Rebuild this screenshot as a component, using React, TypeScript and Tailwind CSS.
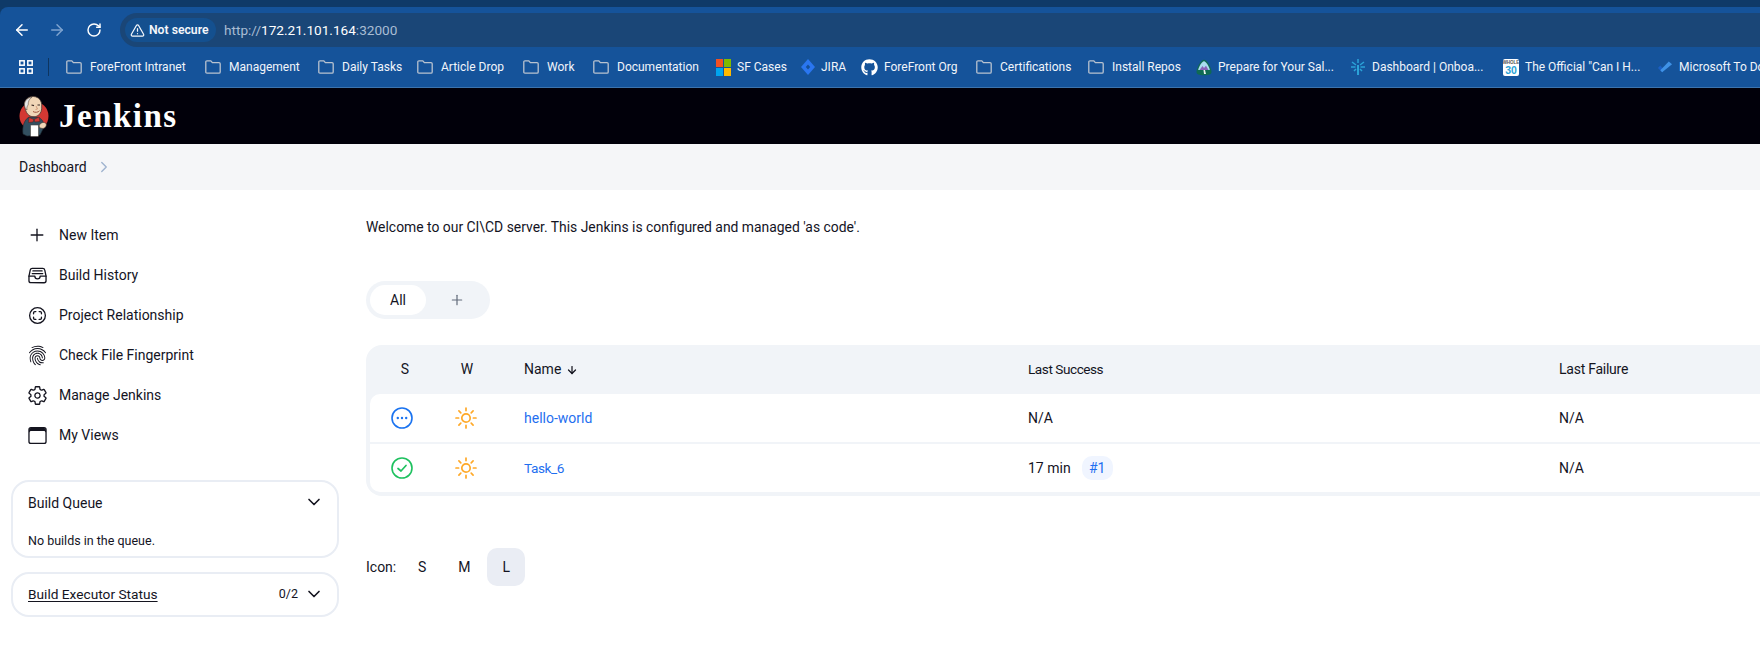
import { ArrowLeft, ArrowRight, RotateCw, TriangleAlert, ChevronRight, ChevronDown, Plus, ArrowDown } from "lucide-react";
import { IoFileTrayFullOutline, IoScanCircleOutline, IoFingerPrintOutline, IoSettingsOutline, IoBrowsersOutline } from "react-icons/io5";
import { FaGithub } from "react-icons/fa";
import type { ReactNode } from "react";

const fontStack = "font-['Roboto','Noto_Sans',sans-serif]";

function FolderIcon() {
  return (
    <svg width="16" height="14" viewBox="0 0 16 14" fill="none" stroke="#b9c3d0" strokeWidth="1.3" className="mr-[2px] shrink-0">
      <path d="M0.8 2 Q0.8 0.8 2 0.8 H5.8 L7.4 2.6 H14 Q15.2 2.6 15.2 3.8 V12 Q15.2 13.2 14 13.2 H2 Q0.8 13.2 0.8 12Z" />
    </svg>
  );
}

function MsLogo() {
  return (
    <svg width="15" height="17" viewBox="0 0 15 17" className="shrink-0">
      <rect x="0" y="0" width="7" height="8" fill="#f25022" />
      <rect x="8" y="0" width="7" height="8" fill="#7fba00" />
      <rect x="0" y="9" width="7" height="8" fill="#00a4ef" />
      <rect x="8" y="9" width="7" height="8" fill="#ffb900" />
    </svg>
  );
}

function JiraIcon() {
  return (
    <svg width="14" height="16" viewBox="0 0 14 16" className="shrink-0">
      <path d="M7 0 L14 8 L7 16 L0 8Z" fill="#2a76f0" />
      <path d="M7 5.5 L9.2 8 L7 10.5 L4.8 8Z" fill="#14509a" />
    </svg>
  );
}

function TrailIcon() {
  return (
    <svg width="16" height="17" viewBox="0 0 16 17" className="shrink-0">
      <path d="M8 0.8 C11 0.8 15.5 9 15.5 13 C15.5 15.5 13 16.2 8 16.2 C3 16.2 0.5 15.5 0.5 13 C0.5 9 5 0.8 8 0.8Z" fill="#0f6a53" />
      <path d="M8 2.2 C10 2.2 13.5 8 13.8 11 L2.2 11 C2.5 8 6 2.2 8 2.2Z" fill="#a9dcef" />
      <path d="M3.5 11 L6.5 7 L8 9 L10 6.8 L12.5 11Z" fill="#8a62b8" />
      <path d="M7.5 11 L9 11 L10 15 L8 15Z" fill="#e9f3ef" />
    </svg>
  );
}

function SnowIcon() {
  return (
    <svg width="16" height="18" viewBox="0 0 16 18" className="shrink-0" stroke="#2ba3d8" strokeWidth="1.5" fill="none">
      <path d="M8 7 L8 17" strokeWidth="2" />
      <path d="M8 1 L8 5 M2 4 L6 7 M14 4 L10 7 M1 9 L5.5 9 M15 9 L10.5 9 M4 13 L6 11 M12 13 L10 11" />
    </svg>
  );
}

function Whole30Icon() {
  return (
    <svg width="16" height="17" viewBox="0 0 16 17" className="shrink-0">
      <rect width="16" height="17" rx="2" fill="#ffffff" />
      <text x="8" y="5" fontSize="4.5" textAnchor="middle" fill="#555" fontFamily="Liberation Sans" fontWeight="700">WHOLE</text>
      <text x="8" y="15" fontSize="10.5" textAnchor="middle" fill="#2aa3d6" fontFamily="Liberation Sans" fontWeight="700">30</text>
    </svg>
  );
}

function TodoIcon() {
  return (
    <svg width="16" height="17" viewBox="0 0 17 17" className="shrink-0">
      <path d="M1 9 L3.5 6.5 L7.5 10.5 L5.5 13.5Z" fill="#1a5fc4" />
      <path d="M5.5 13.5 L3.5 11.5 L12.5 2 L16 5Z" fill="#3f92e6" />
    </svg>
  );
}

function Bookmark({ icon, label, className }: { icon: ReactNode; label: string; className: string }) {
  return (
    <div className={"flex shrink-0 items-center gap-[6px] whitespace-nowrap text-[12px] text-[#f1f5fa] " + className}>
      {icon}
      <span>{label}</span>
    </div>
  );
}

function JenkinsLogo() {
  return (
    <svg width="30" height="41" viewBox="0 0 30 41" className="shrink-0">
      <circle cx="15" cy="20" r="14.5" fill="#d33833" />
      <path d="M5.5 9 C5 3.5 10 0.3 14.5 0.5 C20 0.8 23 5 22.7 10 C23 14 22 17.5 19 19.5 C16 21.5 11.5 21 9 18.5 C6.8 16 5.8 12.5 5.5 9Z" fill="#f0d6b7" stroke="#4a3a33" strokeWidth="0.8" />
      <path d="M5.5 9 C5.3 4.5 9 1.5 13 1.2 C10 3 9 6 9.2 9 C8 10 7.6 12 8 14 C6.5 13 5.7 11 5.5 9Z" fill="#e7e7e7" stroke="#4a3a33" strokeWidth="0.5" />
      <path d="M12.5 9 L15 9.6 M18.5 9 L21 9" stroke="#3a2a25" strokeWidth="1.1" />
      <path d="M14 15.5 C16 16.8 19 16.5 20.5 14.8" stroke="#a0553d" strokeWidth="1" fill="none" />
      <path d="M17 10 L18.5 13 L16.5 13.5" stroke="#c98e6e" strokeWidth="0.8" fill="none" />
      <path d="M4 38 C3 31 5 24 10 21 L20 21.5 C24 24 25 27 25 31 L21 39 L8 40Z" fill="#335061" stroke="#1f2a33" strokeWidth="0.6" />
      <path d="M10 21.5 L15 23.5 L14 26 L9.5 26.5Z M15 23.5 L20 21 L21 25.5 L16 26Z" fill="#d33833" stroke="#49221f" strokeWidth="0.5" />
      <rect x="11.5" y="29" width="8" height="11.5" rx="0.8" fill="#ffffff" stroke="#49423d" strokeWidth="0.6" />
      <path d="M20 30 C21 26.5 25 25.5 27 27.5 C28 29.5 26.5 32 24 32.5 L21 32Z" fill="#f0d6b7" stroke="#4a3a33" strokeWidth="0.6" />
    </svg>
  );
}

function SideItem({ icon, label }: { icon: ReactNode; label: string }) {
  return (
    <div className="flex h-[40px] items-center text-[14px] text-[#14141f]">
      <span className="flex w-[26px] justify-center">{icon}</span>
      <span className="ml-[9px]">{label}</span>
    </div>
  );
}

function Sun() {
  return (
    <svg width="22" height="22" viewBox="0 0 22 22" fill="none" stroke="#ffa928" strokeWidth="1.7" strokeLinecap="round" className="mr-[2px]">
      <circle cx="11" cy="11" r="4.2" />
      <path d="M11 1 V3.6 M11 18.4 V21 M1 11 H3.6 M18.4 11 H21 M3.9 3.9 L5.8 5.8 M16.2 16.2 L18.1 18.1 M3.9 18.1 L5.8 16.2 M16.2 5.8 L18.1 3.9" />
    </svg>
  );
}

function StatusBlue() {
  return (
    <svg width="22" height="22" viewBox="0 0 22 22" fill="none" className="mr-[6px]">
      <circle cx="11" cy="11" r="10" stroke="#1a73f0" strokeWidth="1.6" />
      <circle cx="6.8" cy="11" r="1.2" fill="#1a73f0" />
      <circle cx="11" cy="11" r="1.2" fill="#1a73f0" />
      <circle cx="15.2" cy="11" r="1.2" fill="#1a73f0" />
    </svg>
  );
}

function StatusGreen() {
  return (
    <svg width="22" height="22" viewBox="0 0 22 22" fill="none" className="mr-[6px]">
      <circle cx="11" cy="11" r="10" stroke="#1ec15f" strokeWidth="1.6" />
      <path d="M7 11.5 L10 14 L15 8.5" stroke="#1ec15f" strokeWidth="1.7" strokeLinecap="round" strokeLinejoin="round" />
    </svg>
  );
}

const gridCols = "grid grid-cols-[70px_54px_534px_531px_1fr]";

export default function App() {
  return (
    <div className={"h-[659px] w-[1760px] overflow-hidden bg-white text-[#14141f] " + fontStack}>
      {/* Browser chrome */}
      <div className="h-[7px] bg-[#0f3a68]" />
      <div className="bg-[#0f3a68]">
        <div className="rounded-tl-lg bg-[#15539a]">
          <div className="flex h-[40px] items-start pt-[6px]">
            <div className="flex h-[34px] w-[120px] shrink-0 items-center text-white">
              <ArrowLeft size={18} className="ml-[13px]" strokeWidth={2} />
              <ArrowRight size={18} className="ml-[17px] text-[#7ea3cf]" strokeWidth={2} />
              <RotateCw size={16} className="ml-[20px]" strokeWidth={2.2} />
            </div>
            <div className="flex h-[34px] flex-1 items-center rounded-l-full bg-[#1a4677] pl-[5px]">
              <div className="flex h-[24px] w-[91px] items-center rounded-full bg-[#14508f] pl-[5px] text-[12.2px] font-semibold text-[#f4f7fb]">
                <TriangleAlert size={15} strokeWidth={2} className="mr-[4px] shrink-0" />
                <span className="whitespace-nowrap">Not secure</span>
              </div>
              <div className="ml-[8px] text-[13.6px] text-[#a9bdd4]">
                http://<span className="text-white">172.21.101.164</span>:32000
              </div>
            </div>
          </div>
          <div className="flex h-[41px] items-center overflow-hidden border-b border-[#3c73ad] pl-[19px]">
            <svg width="14" height="14" viewBox="0 0 14 14" fill="none" stroke="#ffffff" strokeWidth="1.5" className="shrink-0">
              <rect x="0.8" y="0.8" width="4.4" height="4.4" />
              <rect x="8.8" y="0.8" width="4.4" height="4.4" />
              <rect x="0.8" y="8.8" width="4.4" height="4.4" />
              <rect x="8.8" y="8.8" width="4.4" height="4.4" />
            </svg>
            <div className="ml-[15px] mr-[17px] h-[18px] w-px shrink-0 bg-[#0e3560]" />
            <div className="flex items-center">
              <Bookmark className="w-[139px]" icon={<FolderIcon />} label="ForeFront Intranet" />
              <Bookmark className="w-[113px]" icon={<FolderIcon />} label="Management" />
              <Bookmark className="w-[99px]" icon={<FolderIcon />} label="Daily Tasks" />
              <Bookmark className="w-[106px]" icon={<FolderIcon />} label="Article Drop" />
              <Bookmark className="w-[70px]" icon={<FolderIcon />} label="Work" />
              <Bookmark className="w-[123px]" icon={<FolderIcon />} label="Documentation" />
              <Bookmark className="w-[85px]" icon={<MsLogo />} label="SF Cases" />
              <Bookmark className="w-[60px]" icon={<JiraIcon />} label="JIRA" />
              <Bookmark className="w-[115px]" icon={<FaGithub size={17} className="shrink-0 text-white" />} label="ForeFront Org" />
              <Bookmark className="w-[112px]" icon={<FolderIcon />} label="Certifications" />
              <Bookmark className="w-[108px]" icon={<FolderIcon />} label="Install Repos" />
              <Bookmark className="w-[154px]" icon={<TrailIcon />} label="Prepare for Your Sal..." />
              <Bookmark className="w-[153px]" icon={<SnowIcon />} label="Dashboard | Onboa..." />
              <Bookmark className="w-[154px]" icon={<Whole30Icon />} label={'The Official "Can I H...'} />
              <Bookmark className="w-[103px]" icon={<TodoIcon />} label="Microsoft To Do" />
            </div>
          </div>
        </div>
      </div>

      {/* Jenkins header */}
      <header className="flex h-[56px] items-center bg-[#01000a] pl-[19px]">
        <JenkinsLogo />
        <span className="ml-[10px] font-['Liberation_Serif',serif] text-[33px] font-bold leading-none tracking-[1.5px] text-white">Jenkins</span>
      </header>

      {/* Breadcrumb */}
      <div className="flex h-[46px] items-center bg-[#f5f6f8] pl-[19px] text-[14px] text-[#14141f]">
        <span>Dashboard</span>
        <ChevronRight size={18} strokeWidth={1.8} className="ml-[8px] text-[#9fb3cf]" />
      </div>

      <div className="flex">
        {/* Sidebar */}
        <aside className="w-[366px] shrink-0 pl-[11px] pr-[27px] pt-[25px]">
          <div className="pl-[13px]">
            <SideItem icon={<Plus size={20} strokeWidth={1.6} />} label="New Item" />
            <SideItem icon={<IoFileTrayFullOutline size={21} />} label="Build History" />
            <SideItem icon={<IoScanCircleOutline size={21} />} label="Project Relationship" />
            <SideItem icon={<IoFingerPrintOutline size={21} />} label="Check File Fingerprint" />
            <SideItem icon={<IoSettingsOutline size={21} />} label="Manage Jenkins" />
            <SideItem icon={<IoBrowsersOutline size={21} />} label="My Views" />
          </div>
          <div className="mt-[25px] h-[78px] rounded-[18px] border-2 border-[#e9edf4] pl-[15px] pr-[13px]">
            <div className="flex h-[41px] items-center justify-between pt-[2px] text-[14px]">
              <span>Build Queue</span>
              <ChevronDown size={20} strokeWidth={2} className="-mt-[3px]" />
            </div>
            <div className="mt-[9px] text-[12.5px]">No builds in the queue.</div>
          </div>
          <div className="mt-[14px] flex h-[45px] items-center rounded-[18px] border-2 border-[#e9edf4] pl-[15px] pr-[13px]">
            <span className="text-[13.7px] underline underline-offset-2">Build Executor Status</span>
            <span className="ml-auto mr-[6px] text-[12.5px]">0/2</span>
            <ChevronDown size={20} strokeWidth={2} className="-mt-[1px]" />
          </div>
        </aside>

        {/* Main */}
        <main className="w-[1500px] shrink-0 pt-[27px] text-[14px]">
          <p className="h-[20px] text-[13.9px] leading-[20px]">Welcome to our CI\CD server. This Jenkins is configured and managed 'as code'.</p>

          <div className="mt-[44px] flex h-[38px] w-[124px] items-center rounded-full bg-[#f1f4f8] p-[4px]">
            <div className="flex h-[30px] w-[56px] items-center justify-center rounded-full bg-white">All</div>
            <Plus size={16} strokeWidth={1.8} className="ml-[23px] text-[#626a7a]" />
          </div>

          <div className="mt-[26px] rounded-[16px] bg-[#f1f4f8] px-[4px] pb-[4px]">
            <div className={gridCols + " h-[49px] items-center"}>
              <div className="text-center">S</div>
              <div className="text-center">W</div>
              <div className="flex items-center pl-[30px]">
                Name
                <ArrowDown size={12} strokeWidth={2.5} className="ml-[5px]" />
              </div>
              <div className="text-[13.6px] tracking-[-0.45px]">Last Success</div>
              <div className="tracking-[-0.25px]">Last Failure</div>
            </div>
            <div className={gridCols + " h-[48px] items-center rounded-t-[10px] bg-white"}>
              <div className="flex justify-center"><StatusBlue /></div>
              <div className="flex justify-center"><Sun /></div>
              <div className="pl-[30px] text-[#1f6ff0]">hello-world</div>
              <div>N/A</div>
              <div>N/A</div>
            </div>
            <div className={gridCols + " mt-[2px] h-[48px] items-center rounded-b-[10px] bg-white"}>
              <div className="flex justify-center"><StatusGreen /></div>
              <div className="flex justify-center"><Sun /></div>
              <div className="pl-[30px] text-[13.6px] tracking-[-0.4px] text-[#1f6ff0]">Task_6</div>
              <div className="flex items-center">
                17 min
                <span className="ml-[11px] flex h-[24px] w-[31px] items-center justify-center rounded-[10px] bg-[#f0f5ff] text-[#1f6ff0]">#1</span>
              </div>
              <div>N/A</div>
            </div>
          </div>

          <div className="mt-[52px] flex h-[38px] items-center">
            <span>Icon:</span>
            <span className="ml-[7px] flex h-[38px] w-[38px] items-center justify-center">S</span>
            <span className="ml-[4px] flex h-[38px] w-[38px] items-center justify-center">M</span>
            <span className="ml-[4px] flex h-[38px] w-[38px] items-center justify-center rounded-[10px] bg-[#eaedf4]">L</span>
          </div>
        </main>
      </div>
    </div>
  );
}
